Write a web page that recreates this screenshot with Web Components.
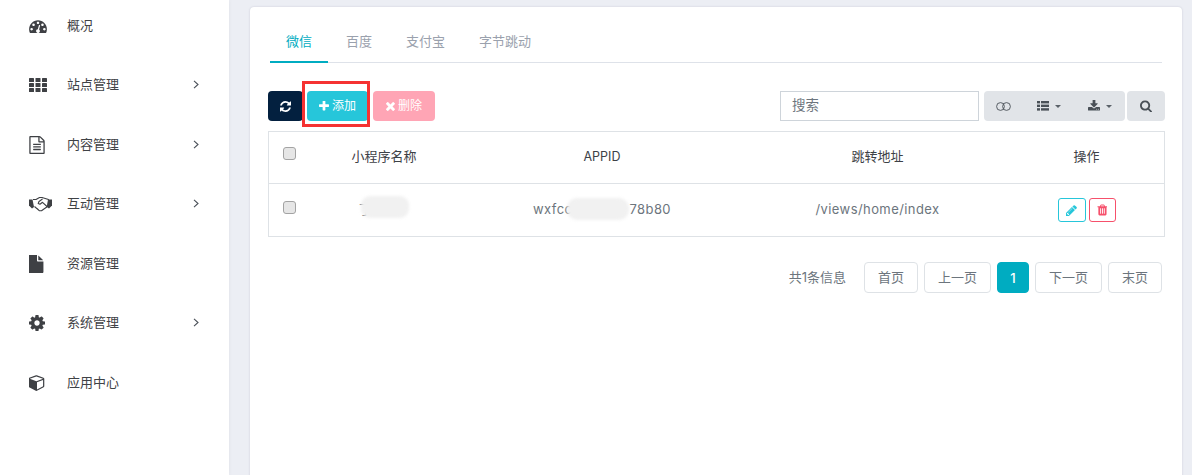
<!DOCTYPE html>
<html lang="zh">
<head>
<meta charset="utf-8">
<title>小程序</title>
<style>
html, body { margin: 0; height: 475px; overflow: hidden; }
body {
    background: #eceef4;
    font-family: Inter, "Noto Sans CJK SC", sans-serif;
    font-size: 13px;
    color: #6c757d;
    display: flex;
}
</style>
</head>
<body>
<side-nav>
    <nav-item icon="gauge" label="概况"></nav-item>
    <nav-item icon="th" label="站点管理" arrow></nav-item>
    <nav-item icon="doc" label="内容管理" arrow></nav-item>
    <nav-item icon="hands" label="互动管理" arrow></nav-item>
    <nav-item icon="file" label="资源管理"></nav-item>
    <nav-item icon="cog" label="系统管理" arrow></nav-item>
    <nav-item icon="cube" label="应用中心"></nav-item>
</side-nav>
<main-card>
    <tab-bar></tab-bar>
    <tool-bar></tool-bar>
    <data-table></data-table>
    <page-bar></page-bar>
</main-card>

<script>
// font awesome 4 outlines, width/height in px at the size they show up on the page
const ICONS = {
    gauge: {box: "0 128 1792 1408", w: 18, h: 14, d: "M384 1152q0-53-37.500-90.500t-90.500-37.500-90.500 37.500-37.500 90.500 37.500 90.500 90.500 37.500 90.500-37.500 37.500-90.500zm192-448q0-53-37.500-90.500t-90.500-37.500-90.500 37.500-37.500 90.500 37.500 90.500 90.500 37.500 90.500-37.500 37.500-90.500zm428 481l101-382q6-26-7.500-48.500t-38.500-29.500-48 6.500-30 39.500l-101 382q-60 5-107 43.500t-63 98.500q-20 77 20 146t117 89 146-20 89-117q16-60-6-117t-72-91zm660-33q0-53-37.500-90.500t-90.500-37.500-90.500 37.500-37.500 90.500 37.500 90.500 90.500 37.500 90.500-37.500 37.500-90.500zm-640-640q0-53-37.500-90.500t-90.500-37.500-90.500 37.500-37.500 90.500 37.500 90.500 90.500 37.500 90.500-37.500 37.500-90.500zm448 192q0-53-37.500-90.500t-90.500-37.500-90.500 37.500-37.500 90.500 37.500 90.500 90.500 37.500 90.500-37.500 37.500-90.500zm320 448q0 261-141 483-19 29-54 29h-1402q-35 0-54-29-141-221-141-483 0-182 71-348t191-286 286-191 348-71 348 71 286 191 191 286 71 348z"},
    doc: {box: "128 0 1536 1792", w: 16, h: 18, d: "M1596 380q28 28 48 76t20 88v1152q0 40-28 68t-68 28h-1344q-40 0-68-28t-28-68v-1600q0-40 28-68t68-28h896q40 0 88 20t76 48zm-444-244v376h376q-10-29-22-41l-313-313q-12-12-41-22zm384 1528v-1024h-416q-40 0-68-28t-28-68v-416h-768v1536h1280zm-1024-864q0-14 9-23t23-9h704q14 0 23 9t9 23v64q0 14-9 23t-23 9h-704q-14 0-23-9t-9-23v-64zm736 224q14 0 23 9t9 23v64q0 14-9 23t-23 9h-704q-14 0-23-9t-9-23v-64q0-14 9-23t23-9h704zm0 256q14 0 23 9t9 23v64q0 14-9 23t-23 9h-704q-14 0-23-9t-9-23v-64q0-14 9-23t23-9h704z"},
    file: {box: "128 0 1536 1792", w: 16, h: 18, d: "M1024 512v-472q22 14 36 28l408 408q14 14 28 36h-472zm-128 32q0 40 28 68t68 28h544v1056q0 40-28 68t-68 28h-1344q-40 0-68-28t-28-68v-1600q0-40 28-68t68-28h800v544z"},
    cog: {box: "128 128 1536 1536", w: 16, h: 16, d: "M1152 896q0-106-75-181t-181-75-181 75-75 181 75 181 181 75 181-75 75-181zm512-109v222q0 12-8 23t-20 13l-185 28q-19 54-39 91 35 50 107 138 10 12 10 25t-9 23q-27 37-99 108t-94 71q-12 0-26-9l-138-108q-44 23-91 38-16 136-29 186-7 28-36 28h-222q-14 0-24.500-8.500t-11.500-21.500l-28-184q-49-16-90-37l-141 107q-10 9-25 9-14 0-25-11-126-114-165-168-7-10-7-23 0-12 8-23 15-21 51-66.500t54-70.500q-27-50-41-99l-183-27q-13-2-21-12.500t-8-23.500v-222q0-12 8-23t19-13l186-28q14-46 39-92-40-57-107-138-10-12-10-24 0-10 9-23 26-36 98.500-107.500t94.500-71.500q13 0 26 10l138 107q44-23 91-38 16-136 29-186 7-28 36-28h222q14 0 24.500 8.500t11.500 21.500l28 184q49 16 90 37l142-107q9-9 24-9 13 0 25 10 129 119 165 170 7 8 7 22 0 12-8 23-15 21-51 66.500t-54 70.500q26 50 41 98l183 28q13 2 21 12.500t8 23.500z"},
    cube: {box: "128 0 1536 1792", w: 16, h: 17, d: "M896 1629l640-349v-636l-640 233v752zm-64-865l698-254-698-254-698 254zm832-252v768q0 35-18 65t-49 47l-704 384q-28 16-61 16t-61-16l-704-384q-31-17-49-47t-18-65v-768q0-40 23-73t61-50l704-256q22-8 44-8t44 8l704 256q38 17 61 50t23 73z"},
    refresh: {box: "128 128 1536 1536", w: 11, h: 11, d: "M1639 1056q0 5-1 7-64 268-268 434.500t-478 166.500q-146 0-282.500-55t-243.500-157l-129 129q-19 19-45 19t-45-19-19-45v-448q0-26 19-45t45-19h448q26 0 45 19t19 45-19 45l-137 137q71 66 161 102t187 36q134 0 250-65t186-179q11-17 53-117 8-23 30-23h192q13 0 22.500 9.500t9.500 22.500zm25-800v448q0 26-19 45t-45 19h-448q-26 0-45-19t-19-45 19-45l138-138q-148-137-349-137-134 0-250 65t-186 179q-11 17-53 117-8 23-30 23h-199q-13 0-22.500-9.500t-9.500-22.500v-7q65-268 270-434.500t480-166.500q146 0 284 55.500t245 156.500l130-129q19-19 45-19t45 19 19 45z"},
    plus: {box: "192 192 1408 1408", w: 10, h: 10, d: "M1600 736v192q0 40-28 68t-68 28h-416v416q0 40-28 68t-68 28h-192q-40 0-68-28t-28-68v-416h-416q-40 0-68-28t-28-68v-192q0-40 28-68t68-28h416v-416q0-40 28-68t68-28h192q40 0 68 28t28 68v416h416q40 0 68 28t28 68z"},
    times: {box: "300 240 1200 1320", w: 9, h: 10, d: "M1490 1322q0 40-28 68l-136 136q-28 28-68 28t-68-28l-294-294-294 294q-28 28-68 28t-68-28l-136-136q-28-28-28-68t28-68l294-294-294-294q-28-28-28-68t28-68l136-136q28-28 68-28t68 28l294 294 294-294q28-28 68-28t68 28l136 136q28 28 28 68t-28 68l-294 294 294 294q28 28 28 68z"},
    search: {box: "64 64 1664 1664", w: 12, h: 12, d: "M1216 832q0-185-131.500-316.500t-316.500-131.500-316.500 131.500-131.500 316.500 131.500 316.500 316.500 131.500 316.500-131.500 131.500-316.500zm512 832q0 52-38 90t-90 38q-54 0-90-38l-343-342q-179 124-399 124-143 0-273.500-55.500t-225-150-150-225-55.500-273.500 55.500-273.500 150-225 225-150 273.500-55.500 273.500 55.500 225 150 150 225 55.500 273.500q0 220-124 399l343 343q37 37 37 90z"},
    pencil: {box: "128 128 1536 1536", w: 11, h: 11, d: "M491 1536l91-91-235-235-91 91v107h128v128h107zm523-928q0-22-22-22-10 0-17 7l-542 542q-7 7-7 17 0 22 22 22 10 0 17-7l542-542q7-7 7-17zm-54-192l416 416-832 832h-416v-416zm683 96q0 53-37 90l-166 166-416-416 166-165q36-38 90-38 53 0 91 38l235 234q37 39 37 91z"},
    trash: {box: "128 64 1408 1664", w: 10, h: 12, d: "M704 1376v-704q0-14-9-23t-23-9h-64q-14 0-23 9t-9 23v704q0 14 9 23t23 9h64q14 0 23-9t9-23zm256 0v-704q0-14-9-23t-23-9h-64q-14 0-23 9t-9 23v704q0 14 9 23t23 9h64q14 0 23-9t9-23zm256 0v-704q0-14-9-23t-23-9h-64q-14 0-23 9t-9 23v704q0 14 9 23t23 9h64q14 0 23-9t9-23zm-544-992h448l-48-117q-7-9-17-11h-317q-10 2-17 11zm928 32v64q0 14-9 23t-23 9h-96v948q0 83-47 143.500t-113 60.500h-832q-66 0-113-58.500t-47-141.500v-952h-96q-14 0-23-9t-9-23v-64q0-14 9-23t23-9h309l70-167q15-37 54-63t79-26h320q40 0 79 26t54 63l70 167h309q14 0 23 9t9 23z"},
    download: {box: "64 128 1664 1536", w: 12, h: 12, d: "M1344 1344q0-26-19-45t-45-19-45 19-19 45 19 45 45 19 45-19 19-45zm256 0q0-26-19-45t-45-19-45 19-19 45 19 45 45 19 45-19 19-45zm128-224v320q0 40-28 68t-68 28h-1472q-40 0-68-28t-28-68v-320q0-40 28-68t68-28h465l135 136q58 56 136 56t136-56l136-136h464q40 0 68 28t28 68zm-325-569q17 41-14 70l-448 448q-18 19-45 19t-45-19l-448-448q-31-29-14-70 17-39 59-39h256v-448q0-26 19-45t45-19h256q26 0 45 19t19 45v448h256q42 0 59 39z"}
};

function icon(name){
    const i = ICONS[name];
    return `<svg width="${i.w}" height="${i.h}" viewBox="${i.box}" fill="currentColor" style="display:block;flex:none"><path d="${i.d}"/></svg>`;
}

// the two icons that are not plain single paths
const TH_ICON = `<svg width="18" height="14" viewBox="0 0 18 14" fill="currentColor" style="display:block;flex:none">
<rect width="5" height="4" rx=".6"/><rect x="6.500" width="5" height="4" rx=".6"/><rect x="13" width="5" height="4" rx=".6"/>
<rect y="5" width="5" height="4" rx=".6"/><rect x="6.500" y="5" width="5" height="4" rx=".6"/><rect x="13" y="5" width="5" height="4" rx=".6"/>
<rect y="10" width="5" height="4" rx=".6"/><rect x="6.500" y="10" width="5" height="4" rx=".6"/><rect x="13" y="10" width="5" height="4" rx=".6"/></svg>`;
const HANDS_ICON = `<svg width="23" height="16" viewBox="0 0 23 16" style="display:block;flex:none">
<path d="M0 3.500h3.500l1.500 7.500-2 1.500L0 9.500z" fill="currentColor"/><path d="M23 3.500h-3.500L18 11l2 1.500 3-3z" fill="currentColor"/>
<path d="M4 3.500 7 3.500 10.500 1.500 13 1.500 19.500 3.500 18.500 10.500 12.500 14.800 10.500 14.800 5.500 10.500M13.500 3 10 5.500 9.200 7.500 11 8.300 13.500 6.300 18 10.500M8 12.500 10.500 14.800" fill="none" stroke="currentColor" stroke-width="1.100" stroke-linejoin="round"/></svg>`;

const FONT = `Inter, "Noto Sans CJK SC", sans-serif`;

class SideNav extends HTMLElement{
    constructor(){
        super();
        this.attachShadow({mode: "open"});
        this.shadowRoot.innerHTML = `
        <style>
        :host{
            display: flex;
            flex-direction: column;
            flex: none;
            width: 229px;
            height: 475px;
            box-sizing: border-box;
            background: #fff;
            box-shadow: 0 0 4px rgba(0,0,0,.06);
        }
        </style>
        <slot></slot>`;
    }
}

class NavItem extends HTMLElement{
    constructor(){
        super();
        this.attachShadow({mode: "open"});
    }

    connectedCallback(){
        const name = this.getAttribute("icon");
        const svg = name === "th" ? TH_ICON : name === "hands" ? HANDS_ICON : icon(name);
        const arrow = this.hasAttribute("arrow")
            ? `<svg class="arrow" width="6" height="9" viewBox="0 0 6 9"><path d="M1 .8 5 4.500 1 8.200" fill="none" stroke="#4a5058" stroke-width="1.100"/></svg>`
            : "";
        this.shadowRoot.innerHTML = `
        <style>
        :host{
            display: flex;
            align-items: center;
            flex: none;
            height: 59.500px;
            padding-left: 29px;
            font-family: ${FONT};
            font-size: 13px;
            color: #3f4246;
        }
        :host(:first-child){ margin-top: -4.700px; }
        .ic{ width: 38px; flex: none; display: flex; color: #3e4044; padding-top: 1px; }
        .label{ flex: 1; padding-bottom: 2px; }
        .arrow{ margin-right: 30px; flex: none; }
        </style>
        <span class="ic">${svg}</span>
        <span class="label">${this.getAttribute("label")}</span>
        ${arrow}`;
    }
}

class MainCard extends HTMLElement{
    constructor(){
        super();
        this.attachShadow({mode: "open"});
        this.shadowRoot.innerHTML = `
        <style>
        :host{
            display: block;
            flex: none;
            width: 932px;
            height: 480px;
            margin: 7px 0 0 21px;
            box-sizing: border-box;
            padding: 13px 17px 0 18px;
            background: #fff;
            border-radius: 4px;
            box-shadow: 0 0 2px rgba(60,70,100,.22);
            font-family: ${FONT};
            font-size: 13px;
            color: #6c757d;
        }
        </style>
        <slot></slot>`;
    }
}

class TabBar extends HTMLElement{
    constructor(){
        super();
        this.attachShadow({mode: "open"});
        const tabs = ["微信", "百度", "支付宝", "字节跳动"];
        this.shadowRoot.innerHTML = `
        <style>
        :host{
            display: flex;
            margin: 0 3px 0 2px;
            height: 43px;
            box-sizing: border-box;
            border-bottom: 1px solid #dee2e9;
        }
        span{
            display: flex;
            align-items: center;
            height: 43px;
            padding: 0 16px 3px;
            margin-right: 2px;
            box-sizing: border-box;
            color: #9aa1ad;
        }
        .on{
            color: #00acc1;
            border-bottom: 2px solid #00acc1;
            padding-bottom: 1px;
        }
        </style>
        ${tabs.map((t, i) => `<span class="${i === 0 ? "on" : ""}">${t}</span>`).join("")}`;
    }
}

class ToolBar extends HTMLElement{
    constructor(){
        super();
        this.attachShadow({mode: "open"});
        this.shadowRoot.innerHTML = `
        <style>
        :host{
            display: flex;
            align-items: center;
            margin-top: 28px;
            height: 30px;
            color: #495057;
        }
        .btn{
            display: flex;
            align-items: center;
            justify-content: center;
            height: 30px;
            box-sizing: border-box;
            border-radius: 4px;
            color: #fff;
            font-size: 12px;
            gap: 3px;
            flex: none;
        }
        .btn span{ padding-bottom: 4px; }
        .refresh{ width: 35px; background: #03203f; margin-right: 4px; }
        .add{ width: 61px; background: #26c6da; margin-right: 5px; position: relative; }
        .del{ width: 62px; background: #ffa5b5; margin-right: auto; }
        /* red annotation frame drawn over the screenshot */
        .add::after{
            content: "";
            position: absolute;
            left: -5px;
            top: -10px;
            width: 68px;
            height: 46px;
            box-sizing: border-box;
            border: 3px solid #f53232;
        }
        .search{
            width: 199px;
            height: 30px;
            box-sizing: border-box;
            border: 1px solid #ced4da;
            padding: 0 11px 4px;
            font: 13.500px ${FONT};
            color: #6c757d;
            display: flex;
            align-items: center;
            margin-right: 5px;
        }
        .group{
            display: flex;
            width: 141px;
            height: 30px;
            background: #e1e4e8;
            border-radius: 4px;
            margin-right: 2px;
            flex: none;
        }
        .group div{
            display: flex;
            align-items: center;
            justify-content: center;
            gap: 6px;
            color: #495057;
        }
        .caret{
            width: 0;
            height: 0;
            border: 3.500px solid transparent;
            border-top-color: #5a6168;
            border-bottom: 0;
        }
        .go{ width: 38px; background: #e1e4e8; color: #495057; }
        </style>
        <span class="btn refresh">${icon("refresh")}</span>
        <span class="btn add">${icon("plus")}<span>添加</span></span>
        <span class="btn del">${icon("times")}<span>删除</span></span>
        <span class="search">搜索</span>
        <span class="group">
            <div style="width:38px">
                <svg width="15" height="9" viewBox="0 0 15 9" fill="none" stroke="#495057" stroke-width=".9"><circle cx="4.500" cy="4.500" r="3.900"/><circle cx="10.500" cy="4.500" r="3.900"/></svg>
            </div>
            <div style="width:53px">
                <svg width="12" height="10" viewBox="0 0 12 10" fill="#495057"><rect width="3" height="2.400"/><rect x="4" width="8" height="2.400"/><rect y="3.600" width="3" height="2.400"/><rect x="4" y="3.600" width="8" height="2.400"/><rect y="7.200" width="3" height="2.400"/><rect x="4" y="7.200" width="8" height="2.400"/></svg>
                <i class="caret"></i>
            </div>
            <div style="width:50px">${icon("download")}<i class="caret"></i></div>
        </span>
        <span class="btn go">${icon("search")}</span>`;
    }
}

class DataTable extends HTMLElement{
    constructor(){
        super();
        this.attachShadow({mode: "open"});
        this.shadowRoot.innerHTML = `
        <style>
        :host{
            display: grid;
            grid-template-columns: 41px 148px 288px 263px 1fr;
            grid-template-rows: 52px 52px;
            margin-top: 10px;
            border: 1px solid #dee2e6;
            color: #6c757d;
            font-size: 13px;
        }
        .cell{
            display: flex;
            align-items: center;
            justify-content: center;
            padding-bottom: 3px;
        }
        .head{ color: #3d4146; border-bottom: 1px solid #dee2e6; padding-bottom: 5px; }
        .head.latin{ padding-bottom: 2px; letter-spacing: 0; font-size: 12.500px; }
        .latin{ letter-spacing: .42px; }
        input{
            appearance: none;
            width: 13px;
            height: 13px;
            margin: 0 0 3px;
            background: #e6e6e6;
            border: 1px solid #a3a3a3;
            border-radius: 3px;
            box-sizing: border-box;
        }
        .masked{ position: relative; white-space: pre; }
        .blob{
            position: absolute;
            background: #f1f1f1;
            filter: blur(1.500px);
        }
        .ops{ gap: 3px; padding-bottom: 0; }
        .op{
            display: flex;
            align-items: center;
            justify-content: center;
            height: 24px;
            box-sizing: border-box;
            border: 1px solid;
            border-radius: 3px;
        }
        .edit{ width: 28px; color: #26c6da; }
        .drop{ width: 27px; color: #f6506b; }
        </style>
        <div class="cell head"><input type="checkbox"></div>
        <div class="cell head">小程序名称</div>
        <div class="cell head latin">APPID</div>
        <div class="cell head">跳转地址</div>
        <div class="cell head">操作</div>
        <div class="cell"><input type="checkbox"></div>
        <div class="cell"><span class="masked">丁<span class="blob" style="left:2px;top:-3px;width:48px;height:22px;border-radius:9px"></span></span><span style="width:37px"></span></div>
        <div class="cell latin"><span class="masked">wxfcc              78b80<span class="blob" style="left:34px;top:-3px;width:62px;height:22px;border-radius:10px"></span></span></div>
        <div class="cell latin">/views/home/index</div>
        <div class="cell ops">
            <span class="op edit">${icon("pencil")}</span>
            <span class="op drop">${icon("trash")}</span>
        </div>`;
    }
}

class PageBar extends HTMLElement{
    constructor(){
        super();
        this.attachShadow({mode: "open"});
        const pages = ["首页", "上一页", "1", "下一页", "末页"];
        this.shadowRoot.innerHTML = `
        <style>
        :host{
            display: flex;
            align-items: center;
            justify-content: flex-end;
            gap: 6px;
            margin: 25px 3px 0 0;
            height: 31px;
            color: #6c757d;
            font-size: 13px;
        }
        .total{ margin-right: 12px; padding-bottom: 3px; }
        a{
            display: flex;
            align-items: center;
            justify-content: center;
            height: 31px;
            box-sizing: border-box;
            padding: 0 13px 3px;
            border: 1px solid #dee2e6;
            border-radius: 4px;
        }
        .cur{
            width: 32px;
            padding: 0;
            background: #00acc1;
            border-color: #00acc1;
            color: #fff;
            font-weight: 500;
        }
        </style>
        <span class="total">共1条信息</span>
        ${pages.map(p => `<a class="${p === "1" ? "cur" : ""}">${p}</a>`).join("")}`;
    }
}

customElements.define("side-nav", SideNav);
customElements.define("nav-item", NavItem);
customElements.define("main-card", MainCard);
customElements.define("tab-bar", TabBar);
customElements.define("tool-bar", ToolBar);
customElements.define("data-table", DataTable);
customElements.define("page-bar", PageBar);
</script>
</body>
</html>
